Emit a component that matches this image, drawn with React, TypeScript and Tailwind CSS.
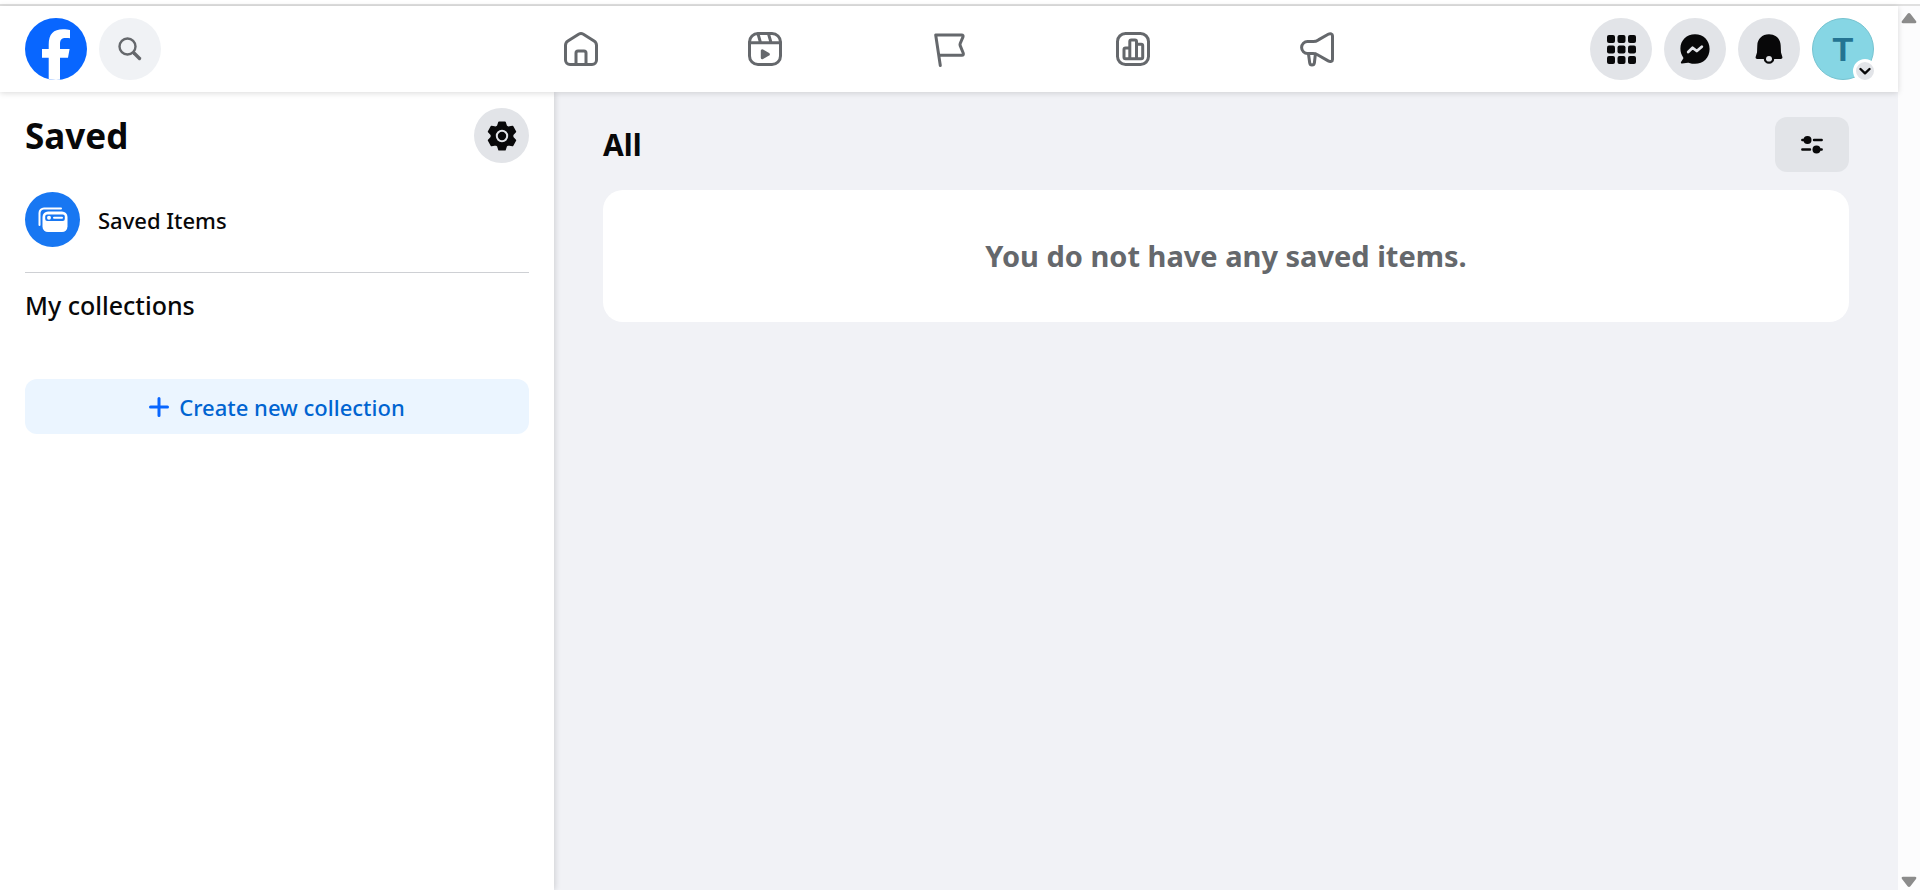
import { ReactNode } from 'react';

interface TabItem {
  label: string;
  icon: ReactNode;
}

const TABS: TabItem[] = [
  {
    label: 'Home',
    icon: (
      <>
        <path d="M1.5 13.5c0-2 .8-3.4 2.4-4.4L15 2.1a3.6 3.6 0 0 1 4 0l11.1 7c1.6 1 2.4 2.4 2.4 4.4V28a4.500 4.500 0 0 1-4.5 4.5H6A4.5 4.5 0 0 1 1.5 28Z" />
        <path d="M12 32.5V21a2 2 0 0 1 2-2h6a2 2 0 0 1 2 2v11.5" />
      </>
    ),
  },
  {
    label: 'Reels',
    icon: (
      <>
        <rect x="1.5" y="1.5" width="31" height="31" rx="8.5" />
        <path d="M1.5 10.8h31M10 1.8l2.600 9M20.5 1.8l2.600 9" />
        <path d="M14.300 18.800v7l6-3.500Z" fill="currentColor" />
      </>
    ),
  },
  {
    label: 'Pages',
    icon: <path d="M8.3 33.500 3.7 3h26c1.3 0 1.7.7 1.3 1.8L28.2 11.500c-.3.8-.3 1.4 0 2.1l3 7.4c.5 1.4 0 2.3-1.3 2.3H6.8" />,
  },
  {
    label: 'Dashboard',
    icon: (
      <>
        <rect x="1.5" y="1.5" width="31" height="31" rx="8" />
        <path d="M13.8 26.7V16H9.5A1.500 1.5 0 0 0 8 17.500v7.7a1.5 1.5 0 0 0 1.5 1.5h15.7a1.5 1.5 0 0 0 1.5-1.5V13.8a1.5 1.5 0 0 0-1.5-1.5h-4.700M13.8 16V9.500A1.5 1.5 0 0 1 15.3 8H19a1.5 1.5 0 0 1 1.5 1.5v17.2" />
      </>
    ),
  },
  {
    label: 'Ads',
    icon: (
      <>
        <path d="M7.600 9.500h5.600c2 0 3.500-.5 5.200-1.600l9.800-5.600c2.200-1.200 4.300-.5 4.300 1.500v23.600c0 2-2.100 2.700-4.300 1.500l-9.800-5.700c-1.700-1.100-3.200-1.700-5.200-1.700H7.600a6 6 0 0 1 0-12Z" />
        <path d="m8.500 22 1.200 8.800c.2 1.500 1 2.200 2.300 2.200s2.200-.7 2.400-2.200l1-8.800" />
      </>
    ),
  },
];

function FacebookLogo() {
  return (
    <svg className="size-[62px]" viewBox="0 0 62 62" aria-hidden="true">
      <defs>
        <clipPath id="logo-circle">
          <circle cx="31" cy="31" r="31" />
        </clipPath>
      </defs>
      <g clipPath="url(#logo-circle)">
        <rect width="62" height="62" fill="#0866ff" />
        <path
          d="M23.7 62V39.7H17V31h6.7v-4.3C23.7 16 28.5 11.3 38 11.3c3 0 5.5.3 7 .8v8.2c-1-.1-2.4-.2-4-.2-4.6 0-6 1.8-6 6.2V31h9.6L43 39.7h-8V62Z"
          fill="#fff"
        />
      </g>
    </svg>
  );
}

function GridIcon() {
  return (
    <svg className="size-[29px]" viewBox="0 0 29 29" fill="currentColor" aria-hidden="true">
      {[0, 10.5, 21].map((y) =>
        [0, 10.5, 21].map((x) => <rect key={`${x}-${y}`} x={x} y={y} width="8" height="8" rx="2" />)
      )}
    </svg>
  );
}

function MessengerIcon() {
  return (
    <svg className="size-[30px]" viewBox="0 0 30 30" aria-hidden="true">
      <path
        d="M15 .3C6.7.3.4 6.4.4 14.6c0 3.400 1 6.3 2.7 8.6.3.4.4.9.2 1.4L1 28c-.4.9.1 1.6 1.100 1.5l5.8-.8c.5-.1.9 0 1.4.2 1.7.6 3.6.9 5.7.9 8.300 0 14.6-6.3 14.6-14.9S23.3.3 15 .3Z"
        fill="currentColor"
      />
      <path d="m8.200 18 4.400-4.200 4.200 3.200 5-4.300" fill="none" stroke="#e2e4e8" strokeWidth="2.8" strokeLinejoin="round" strokeLinecap="round" />
    </svg>
  );
}

function BellIcon() {
  return (
    <svg className="size-[30px]" viewBox="0 0 30 30" aria-hidden="true">
      <path
        d="M15 .3C8.2.3 3.5 5 3.3 11.500L3 18.500l-1.300 4.300c-.4 1.300.2 2.200 1.500 2.200h23.600c1.300 0 1.900-.9 1.500-2.200L27 18.500l-.3-7C26.500 5 21.8.3 15 .3Z"
        fill="currentColor"
      />
      <circle cx="15" cy="25" r="3" fill="#e2e4e8" />
      <path d="M10.800 24.500a4.200 4.200 0 0 0 8.400 0" fill="none" stroke="currentColor" strokeWidth="2.200" />
    </svg>
  );
}

const ACTIONS: TabItem[] = [
  { label: 'Menu', icon: <GridIcon /> },
  { label: 'Messenger', icon: <MessengerIcon /> },
  { label: 'Notifications', icon: <BellIcon /> },
];

function Header() {
  return (
    <header className="relative z-10 grid h-[86px] grid-cols-[1fr_minmax(0,920px)_1fr] items-center bg-white shadow-[0_1px_6px_rgba(0,0,0,0.15)]">
      <div className="flex items-center gap-3 pl-[25px]">
        <a href="#" aria-label="Facebook">
          <FacebookLogo />
        </a>
        <button
          type="button"
          aria-label="Search Facebook"
          className="flex size-[62px] items-center justify-center rounded-full bg-[#f0f2f5] text-[#65686c]"
        >
          <svg className="size-6" viewBox="0 0 24 24" fill="none" stroke="currentColor" strokeLinecap="round" aria-hidden="true">
            <circle cx="9.500" cy="9.5" r="8" strokeWidth="2.4" />
            <path d="m16 16 5.500 5.500" strokeWidth="3.4" />
          </svg>
        </button>
      </div>

      <nav className="flex">
        {TABS.map((tab) => (
          <a key={tab.label} href="#" aria-label={tab.label} className="flex flex-1 justify-center text-[#65686c]">
            <svg
              className="size-[34px] overflow-visible"
              viewBox="0 0 34 34"
              fill="none"
              stroke="currentColor"
              strokeWidth="3"
              strokeLinecap="round"
              strokeLinejoin="round"
              aria-hidden="true"
            >
              {tab.icon}
            </svg>
          </a>
        ))}
      </nav>

      <div className="flex items-center justify-end gap-3 pr-6">
        {ACTIONS.map((action) => (
          <button
            key={action.label}
            type="button"
            aria-label={action.label}
            className="flex size-[62px] items-center justify-center rounded-full bg-[#e2e4e8]"
          >
            {action.icon}
          </button>
        ))}
        <button
          type="button"
          aria-label="Your profile"
          className="relative flex size-[62px] items-center justify-center rounded-full border border-[#76c3d0] bg-[#86d6e4] font-['Liberation_Sans',sans-serif] text-[34px] font-bold text-[#247492]"
        >
          T
          {/* Account menu badge */}
          <span className="absolute -right-1 -bottom-1 flex size-6 items-center justify-center rounded-full border-3 border-white bg-[#e2e4e8] text-[#080809]">
            <svg className="size-3 shrink-0" viewBox="0 0 12 12" fill="none" stroke="currentColor" strokeWidth="2.4" strokeLinecap="round" strokeLinejoin="round" aria-hidden="true">
              <path d="m1.5 4 4.5 4.3L10.5 4" />
            </svg>
          </span>
        </button>
      </div>
    </header>
  );
}

function Sidebar() {
  return (
    <aside className="z-[5] w-[554px] shrink-0 bg-white px-[25px] pt-4 shadow-[1px_0_6px_rgba(0,0,0,0.15)]">
      <div className="flex items-center justify-between">
        <h1 className="text-[35px] leading-10 font-bold">Saved</h1>
        <button
          type="button"
          aria-label="Settings"
          className="flex size-[55px] items-center justify-center rounded-full bg-[#e2e4e8]"
        >
          <svg className="size-[30px]" viewBox="-15 -15 30 30" aria-hidden="true">
            <path
              d="M-3-13.800h6L4.300-9.800 6.300-8.600 10.500-9.500 13.400-4.300 10.600-1.200v2.400l2.800 3.100-2.900 5.200-4.200-.9-2 1.200L3 13.800h-6L-4.300 9.800-6.300 8.600-10.500 9.500-13.400 4.300-10.600 1.200v-2.400l-2.800-3.100 2.900-5.200 4.200.9 2-1.200Z"
              fill="currentColor"
              stroke="currentColor"
              strokeWidth="1.6"
              strokeLinejoin="round"
            />
            <circle r="5.2" fill="none" stroke="#e2e4e8" strokeWidth="2" />
          </svg>
        </button>
      </div>

      <a href="#" className="mt-[29px] flex items-center gap-[18px]">
        <span className="flex size-[55px] items-center justify-center rounded-full bg-[#1877f2]">
          <svg className="size-[30px]" viewBox="0 0 30 30" aria-hidden="true">
            <path d="M1.5 20V8A4.500 4.500 0 0 1 6 3.500h17" fill="none" stroke="#fff" strokeWidth="2" strokeLinecap="round" />
            <rect x="4.5" y="6.500" width="25" height="20.500" rx="5.500" fill="#fff" />
            <rect x="7.200" y="9.500" width="19.600" height="6.500" rx="2" fill="#1877f2" />
            <circle cx="11" cy="12.700" r="2" fill="#fff" />
            <path d="M16 12.700h8" stroke="#fff" strokeWidth="2" strokeLinecap="round" />
          </svg>
        </span>
        <span className="text-[22px] leading-7 font-medium">Saved Items</span>
      </a>

      <hr className="mt-[25px] border-[#ced0d4]" />
      <h2 className="mt-4 text-[25px] leading-8 font-medium">My collections</h2>

      <button
        type="button"
        className="mt-[58px] flex h-[55px] w-full items-center justify-center gap-2.5 rounded-xl bg-[#ebf5ff] text-[22px] leading-7 font-medium text-[#0064d1]"
      >
        <svg className="size-5 text-[#0866ff]" viewBox="0 0 20 20" fill="none" stroke="currentColor" strokeWidth="3" strokeLinecap="round" aria-hidden="true">
          <path d="M10 1.5v17M1.5 10h17" />
        </svg>
        Create new collection
      </button>
    </aside>
  );
}

function SavedList() {
  return (
    <main className="flex-1 bg-[#f1f2f6] px-[49px] pt-[25px]">
      <div className="flex items-center justify-between">
        <h2 className="text-[30px] leading-10 font-bold">All</h2>
        <button
          type="button"
          aria-label="Filter saved items"
          className="flex h-[55px] w-[74px] items-center justify-center rounded-xl bg-[#e2e4e8]"
        >
          <svg className="h-[18px] w-[22px]" viewBox="0 0 22 18" stroke="currentColor" strokeWidth="2.4" strokeLinecap="round" aria-hidden="true">
            <path d="M1.300 4h5M13 4h7.700M1.300 13.500H9M15 13.500h5.700" />
            <circle cx="6.5" cy="4" r="4" fill="currentColor" stroke="none" />
            <circle cx="15.5" cy="13.5" r="4" fill="currentColor" stroke="none" />
          </svg>
        </button>
      </div>
      <section className="mt-[18px] rounded-[20px] bg-white py-12 text-center">
        <p className="text-[29px] leading-9 font-bold text-[#65686c]">You do not have any saved items.</p>
      </section>
    </main>
  );
}

function ScrollTrack() {
  return (
    <div className="flex w-[22px] shrink-0 flex-col items-center justify-between bg-[#fcfcfd] pt-[6px] pb-[2px] text-[#8b8b8b]" aria-hidden="true">
      <svg className="h-3 w-4" viewBox="0 0 16 12" fill="currentColor">
        <path d="M6.6 1.7 1 9c-.8 1.2-.3 2.2 1 2.2h12c1.3 0 1.8-1 1-2.2L9.4 1.7c-.8-1-2-1-2.8 0Z" />
      </svg>
      <svg className="h-3 w-4" viewBox="0 0 16 12" fill="currentColor">
        <path d="M6.6 10.3 1 3C.2 1.8.7.8 2 .8h12c1.3 0 1.8 1 1 2.2l-5.6 7.300c-.8 1-2 1-2.8 0Z" />
      </svg>
    </div>
  );
}

export default function App() {
  return (
    <div className="flex min-h-screen flex-col bg-white pt-1 font-['Noto_Sans',sans-serif] text-[#080809]">
      <div className="flex grow border-t-2 border-[#e0e0e0]">
        <div className="flex min-w-0 flex-1 flex-col">
          <Header />
          <div className="flex grow">
            <Sidebar />
            <SavedList />
          </div>
        </div>
        <ScrollTrack />
      </div>
    </div>
  );
}
